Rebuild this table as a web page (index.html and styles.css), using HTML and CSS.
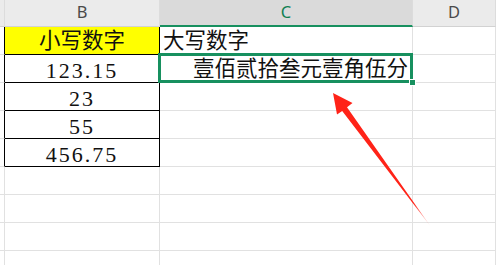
FILE: index.html
```html
<!DOCTYPE html>
<html lang="zh-CN">
<head>
<meta charset="utf-8">
<title>大写金额</title>
<link rel="stylesheet" href="styles.css">
</head>
<body>
<div class="sheet">
  <div class="hd"></div>
  <div class="hd">B</div>
  <div class="hd hd-active">C</div>
  <div class="hd">D</div>

  <div class="cell edge-box"></div>
  <div class="cell num box yellow">小写数字</div>
  <div class="cell txt">大写数字</div>
  <div class="cell"></div>

  <div class="cell edge-box"></div>
  <div class="cell num box">123.15</div>
  <div class="cell txt right selected">壹佰贰拾叁元壹角伍分<span class="handle"></span></div>
  <div class="cell"></div>

  <div class="cell edge-box"></div>
  <div class="cell num box">23</div>
  <div class="cell"></div>
  <div class="cell"></div>

  <div class="cell edge-box"></div>
  <div class="cell num box">55</div>
  <div class="cell"></div>
  <div class="cell"></div>

  <div class="cell edge-box"></div>
  <div class="cell num box">456.75</div>
  <div class="cell"></div>
  <div class="cell"></div>

  <div class="cell"></div><div class="cell"></div><div class="cell"></div><div class="cell"></div>
  <div class="cell"></div><div class="cell"></div><div class="cell"></div><div class="cell"></div>
  <div class="cell"></div><div class="cell"></div><div class="cell"></div><div class="cell"></div>
  <div class="cell"></div><div class="cell"></div><div class="cell"></div><div class="cell"></div>
</div>

<svg class="arrow" width="496" height="265" viewBox="0 0 496 265">
  <defs>
    <linearGradient id="fade" gradientUnits="userSpaceOnUse" x1="333" y1="93" x2="431" y2="227">
      <stop offset="0" stop-color="#ff2318"/>
      <stop offset="0.82" stop-color="#ff2318"/>
      <stop offset="1" stop-color="#ff2318" stop-opacity="0"/>
    </linearGradient>
  </defs>
  <polygon fill="url(#fade)" points="333,93 352.5,103 347,107.3 431,227 342.2,111 337,114.5"/>
</svg>
</body>
</html>
```

FILE: styles.css
```css
html, body {
  margin: 0;
  padding: 0;
  background: #ffffff;
  overflow: hidden;
}

.sheet {
  width: 496px;
  height: 265px;
  display: grid;
  grid-template-columns: 5px 155px 253px 1fr;
  grid-template-rows: 27px repeat(9, 28px);
  overflow: hidden;
}

/* column header strip */
.hd {
  box-sizing: border-box;
  background: #ebebeb;
  border-right: 1px solid #dcdcdc;
  border-bottom: 1px solid #d2d2d2;
  font-family: "Noto Sans", "Liberation Sans", sans-serif;
  font-size: 16.5px;
  color: #4a4a4a;
  display: flex;
  align-items: center;
  justify-content: center;
  line-height: 1;
  padding-bottom: 1px;
}

.hd-active {
  background: #dadada;
  color: #107f52;
  border-bottom: 2px solid #17905f;
}

/* body cells */
.cell {
  box-sizing: border-box;
  border-right: 1px solid #e1e1e1;
  border-bottom: 1px solid #e1e1e1;
  font-family: "Liberation Serif", "Noto Sans CJK SC", serif;
  font-size: 21.5px;
  color: #111111;
  line-height: 28px;
  white-space: nowrap;
  position: relative;
}

.edge-box {
  border-right-color: #000000;
}

.box {
  border-right-color: #000000;
  border-bottom-color: #000000;
}

.num {
  text-align: center;
  font-size: 22px;
  letter-spacing: 2px;
  padding-top: 2px;
}

.yellow {
  background: #ffff00;
  font-size: 21.5px;
  letter-spacing: 0;
  padding-top: 0;
}

.txt {
  padding-left: 3px;
}

.right {
  text-align: right;
  padding-left: 0;
  padding-right: 4px;
}

/* active cell frame and fill handle */
.selected::after {
  content: "";
  position: absolute;
  left: -2px;
  top: -2px;
  right: -1px;
  bottom: -1px;
  border: 3px solid #17905f;
}

.handle {
  position: absolute;
  right: -4px;
  bottom: -4px;
  width: 5px;
  height: 5px;
  background: #17905f;
  border: 1px solid #ffffff;
  z-index: 2;
}

.arrow {
  position: absolute;
  left: 0;
  top: 0;
  pointer-events: none;
}
```
